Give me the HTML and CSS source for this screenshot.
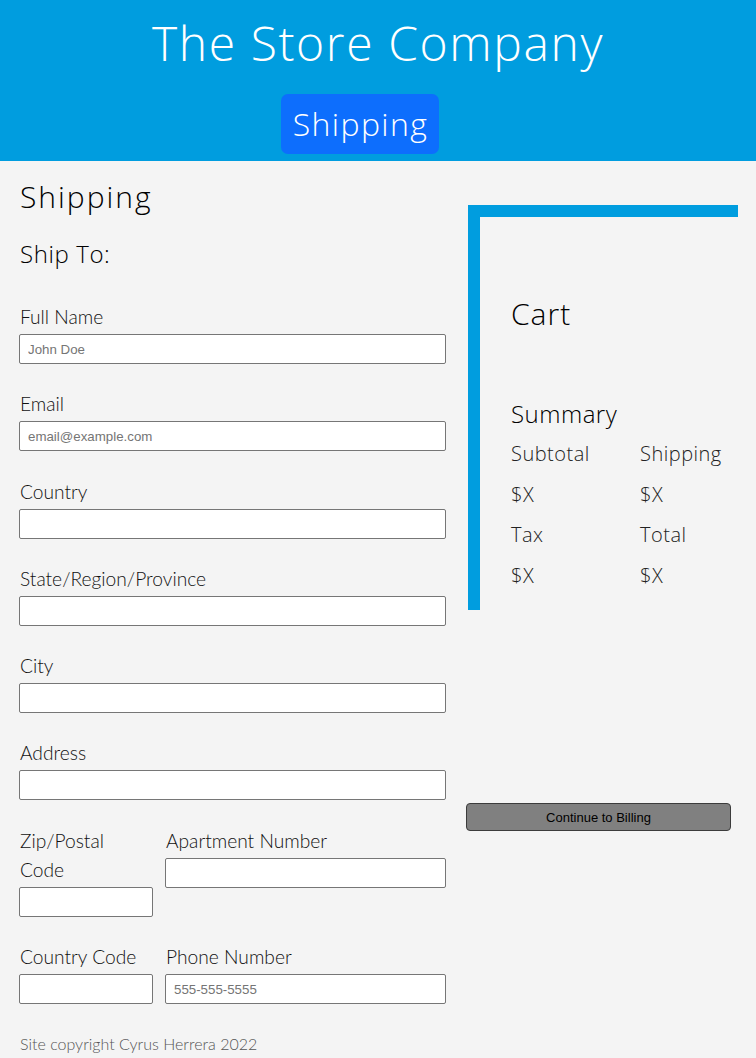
FILE: index.html
```html
<!DOCTYPE html>
<html lang="en">
<head>
    <meta charset="UTF-8">
    <meta name="viewport" content="width=device-width, initial-scale=1.0">
    <title>The Store Company - Shipping</title>
    <link rel="stylesheet" href="styles.css">
</head>
<body>
    <header class="site-header">
        <h1 class="site-title">The Store Company</h1>
        <nav class="steps">
            <a href="#" class="step active">Shipping</a>
        </nav>
    </header>

    <main class="checkout">
        <section class="shipping">
            <h2 class="page-title">Shipping</h2>
            <h3 class="section-title">Ship To:</h3>

            <form class="ship-form">
                <div class="field">
                    <label for="fullname">Full Name</label>
                    <input type="text" id="fullname" placeholder="John Doe">
                </div>
                <div class="field">
                    <label for="email">Email</label>
                    <input type="email" id="email" placeholder="email@example.com">
                </div>
                <div class="field">
                    <label for="country">Country</label>
                    <input type="text" id="country">
                </div>
                <div class="field">
                    <label for="state">State/Region/Province</label>
                    <input type="text" id="state">
                </div>
                <div class="field">
                    <label for="city">City</label>
                    <input type="text" id="city">
                </div>
                <div class="field">
                    <label for="address">Address</label>
                    <input type="text" id="address">
                </div>
                <div class="field-row">
                    <div class="field small">
                        <label for="zip">Zip/Postal Code</label>
                        <input type="text" id="zip">
                    </div>
                    <div class="field">
                        <label for="apt">Apartment Number</label>
                        <input type="text" id="apt">
                    </div>
                </div>
                <div class="field-row">
                    <div class="field small">
                        <label for="ccode">Country Code</label>
                        <input type="text" id="ccode">
                    </div>
                    <div class="field">
                        <label for="phone">Phone Number</label>
                        <input type="tel" id="phone" placeholder="555-555-5555">
                    </div>
                </div>
            </form>
        </section>

        <aside class="sidebar">
            <div class="cart">
                <h2 class="cart-title">Cart</h2>
                <h3 class="summary-title">Summary</h3>
                <div class="summary">
                    <span>Subtotal</span>
                    <span>Shipping</span>
                    <span>$X</span>
                    <span>$X</span>
                    <span>Tax</span>
                    <span>Total</span>
                    <span>$X</span>
                    <span>$X</span>
                </div>
            </div>
            <button class="continue-btn" type="button">Continue to Billing</button>
        </aside>
    </main>

    <footer class="site-footer">Site copyright Cyrus Herrera 2022</footer>
</body>
</html>
```

FILE: styles.css
```css
* {
    box-sizing: border-box;
}

body {
    margin: 0;
    background: #f4f4f4;
    color: #000;
    font-family: Lato, "Open Sans", sans-serif;
    font-weight: 300;
}

h1, h2, h3 {
    margin: 0;
    font-family: "Open Sans", Lato, sans-serif;
    font-weight: 300;
}

/* header */

.site-header {
    background: #009ddf;
    height: 161px;
    padding-top: 14px;
    text-align: center;
}

.site-title {
    color: #fff;
    font-size: 48px;
    line-height: 58px;
    letter-spacing: 1.6px;
}

.steps {
    display: flex;
    justify-content: center;
    margin-top: 22px;
    padding-right: 36px;
}

.step {
    display: block;
    background: #0d6efd;
    color: #fff;
    text-decoration: none;
    font-family: "Open Sans", Lato, sans-serif;
    font-weight: 300;
    font-size: 32px;
    line-height: 60px;
    height: 60px;
    padding: 0 11px 0 12px;
    letter-spacing: 1.4px;
    border-radius: 7px;
}

/* layout */

.checkout {
    display: grid;
    grid-template-columns: 427px 270px;
    column-gap: 22px;
    padding: 0 18px 0 19px;
}

/* left column */

.page-title {
    font-size: 30px;
    line-height: 36px;
    margin-top: 18px;
    padding-left: 1px;
    letter-spacing: 2px;
}

.section-title {
    font-size: 24px;
    line-height: 29px;
    margin-top: 24px;
    padding-left: 1px;
    letter-spacing: 0.6px;
}

.ship-form {
    margin-top: 34px;
}

.field {
    margin-bottom: 25.3px;
}

.field label {
    display: block;
    font-size: 19.2px;
    line-height: 29px;
    margin-bottom: 3px;
    padding-left: 1px;
    color: #111;
}

.field input {
    display: block;
    width: 100%;
    height: 30px;
    padding: 0 8px;
    background: #fff;
    border: 1px solid #767676;
    border-radius: 2px;
    font-family: "Liberation Sans", Arial, sans-serif;
    font-size: 13.3px;
}

.field input::placeholder {
    color: #757575;
}

.field-row {
    display: grid;
    grid-template-columns: 134px 1fr;
    column-gap: 12px;
}

.field-row .field {
    margin-bottom: 25.3px;
}

/* cart */

.sidebar {
    margin-top: 44px;
}

.cart {
    border-top: 12px solid #009ddf;
    border-left: 12px solid #009ddf;
    padding: 79px 12px 14px 31px;
}

.cart-title {
    font-size: 30px;
    line-height: 36px;
    letter-spacing: 1px;
}

.summary-title {
    font-size: 24px;
    line-height: 29px;
    margin-top: 67px;
    letter-spacing: 0.5px;
}

.summary {
    display: grid;
    grid-template-columns: 129px 1fr;
    grid-auto-rows: 40.5px;
    margin-top: 6px;
    font-family: "Open Sans", Lato, sans-serif;
    font-weight: 300;
    font-size: 20px;
    line-height: 40.5px;
    letter-spacing: 0.5px;
    color: #222;
}

.continue-btn {
    display: block;
    width: 265px;
    height: 28px;
    margin: 193px 0 0 -2px;
    background: #808080;
    border: 1px solid #3c3c3c;
    border-radius: 4px;
    color: #000;
    font-family: "Liberation Sans", Arial, sans-serif;
    font-size: 13px;
    cursor: pointer;
}

/* footer */

.site-footer {
    padding: 0 0 8px 20px;
    margin-top: 3px;
    font-size: 16px;
    line-height: 24px;
    color: #555;
}
```
